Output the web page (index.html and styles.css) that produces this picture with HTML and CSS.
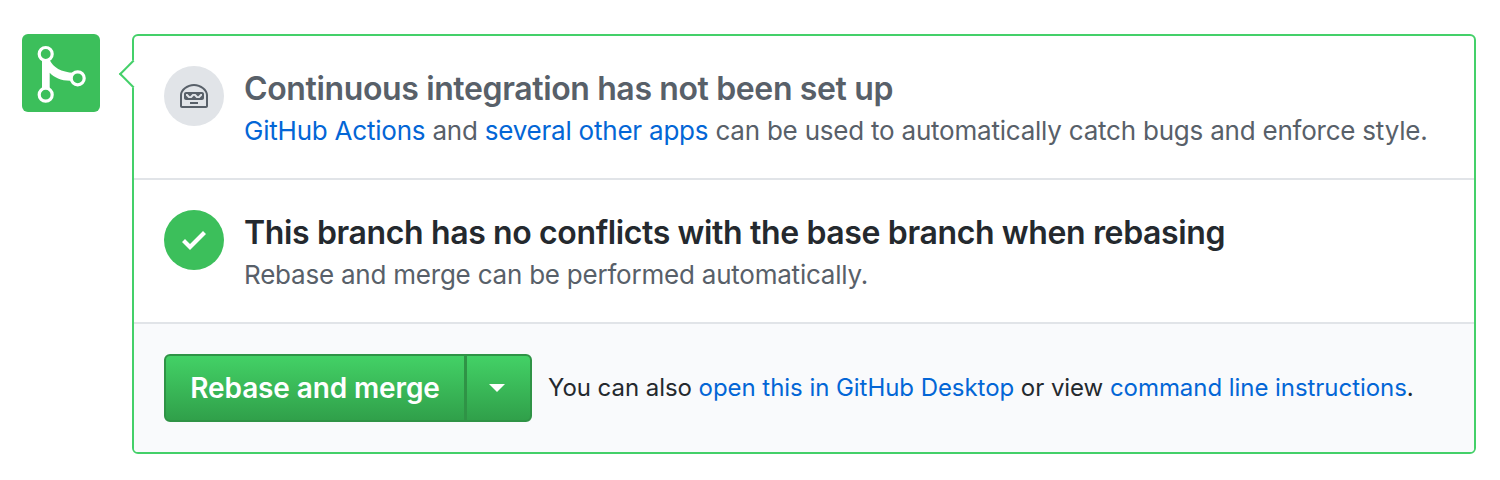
FILE: index.html
```html
<!DOCTYPE html>
<html lang="en">
<head>
  <meta charset="UTF-8">
  <title>Merge status</title>
  <link rel="stylesheet" href="styles.css">
</head>
<body>
  <div class="timeline">
    <div class="merge-icon">
      <svg width="78" height="78" viewBox="0 0 78 78" fill="#3cbf5b" stroke="#fff">
        <path d="M20 20H27.700V26C31 33 39 38.500 52 38.700L48 46.800C39 46.500 32 43.500 27.700 38.700V60H20Z" fill="#fff" stroke="none"/>
        <circle cx="23.700" cy="20" r="6.500" stroke-width="3.200"/>
        <circle cx="23.700" cy="60.700" r="6.500" stroke-width="3.200"/>
        <circle cx="55.700" cy="44.300" r="6.500" stroke-width="3.200"/>
      </svg>
    </div>

    <div class="merge-box">
      <span class="caret"></span>

      <div class="section">
        <div class="status-icon neutral">
          <svg width="28" height="32" viewBox="0 0 14 16" fill="#586069">
            <path fill-rule="evenodd" d="M3 6c-.55 0-1 .45-1 1v2c0 .55.45 1 1 1h8c.55 0 1-.45 1-1V7c0-.55-.45-1-1-1H3zm8 1.750L9.750 9h-1.500L7 7.750 5.750 9h-1.500L3 7.750V7h.750L5 8.250 6.250 7h1.500L9 8.250 10.250 7H11v.750zM5 11h4v1H5v-1zm2-9C3.390 2 0 4.750 0 7.500V13c0 .550.450 1 1 1h12c.550 0 1-.450 1-1V7.500C14 4.750 10.610 2 7 2zm6 11H1V7.500C1 5.220 4.080 3 7 3s6 2.220 6 4.500V13z"/>
          </svg>
        </div>
        <div>
          <h3 class="muted-title">Continuous integration has not been set up</h3>
          <p class="note"><a href="#">GitHub Actions</a> and <a href="#">several other apps</a> can be used to automatically catch bugs and enforce style.</p>
        </div>
      </div>

      <div class="section">
        <div class="status-icon success">
          <svg width="24" height="32" viewBox="0 0 12 16" fill="#fff">
            <path fill-rule="evenodd" d="M12 5l-8 8-4-4 1.500-1.500L4 10l6.500-6.500L12 5z"/>
          </svg>
        </div>
        <div>
          <h3>This branch has no conflicts with the base branch when rebasing</h3>
          <p class="note">Rebase and merge can be performed automatically.</p>
        </div>
      </div>

      <div class="actions">
        <div class="btn-group">
          <button class="btn btn-main">Rebase and merge</button>
          <button class="btn btn-caret"><span class="down"></span></button>
        </div>
        <p class="alt">You can also <a href="#">open this in GitHub Desktop</a> or view <a href="#">command line instructions</a>.</p>
      </div>
    </div>
  </div>
</body>
</html>
```

FILE: styles.css
```css
body {
  margin: 0;
  background: #ffffff;
  font-family: Inter, "Liberation Sans", sans-serif;
  color: #24292e;
}

a {
  color: #0366d6;
  text-decoration: none;
}

.timeline {
  display: flex;
  gap: 32px;
  align-items: flex-start;
  padding: 34px 24px 0 22px;
}

.merge-icon {
  width: 78px;
  height: 78px;
  flex: none;
  background: #3cbf5b;
  border-radius: 6px;
}

.merge-icon svg {
  display: block;
}

.merge-box {
  position: relative;
  flex: 1;
  border: 2px solid #44d069;
  border-radius: 6px;
}

.caret {
  position: absolute;
  top: 28px;
  left: -11px;
  width: 20px;
  height: 20px;
  box-sizing: border-box;
  background: #ffffff;
  border-left: 2px solid #44d069;
  border-bottom: 2px solid #44d069;
  transform: rotate(45deg);
}

.section {
  display: flex;
  gap: 20px;
  height: 144px;
  padding: 30px 30px 0;
  box-sizing: border-box;
  border-bottom: 2px solid #e1e4e8;
}

.status-icon {
  width: 60px;
  height: 60px;
  flex: none;
  display: flex;
  justify-content: center;
  align-items: center;
  border-radius: 50%;
}

.neutral {
  background: #e1e4e8;
}

.success {
  background: #3cbf5b;
}

h3 {
  margin: 0 0 -1px;
  font-size: 32px;
  line-height: 46px;
  font-weight: 600;
  letter-spacing: -0.37px;
}

.muted-title {
  color: #586069;
}

.note {
  margin: 0;
  font-size: 26px;
  line-height: 40px;
  letter-spacing: -0.22px;
  color: #586069;
}

.actions {
  display: flex;
  align-items: center;
  gap: 16px;
  height: 128px;
  padding: 0 30px;
  background: #f9fafc;
  border-radius: 0 0 4px 4px;
}

.btn-group {
  display: flex;
  flex: none;
}

.btn {
  height: 68px;
  margin: 0;
  color: #ffffff;
  font-family: inherit;
  font-size: 28px;
  font-weight: 600;
  letter-spacing: -0.12px;
  background: linear-gradient(#43d166, #30a04a);
  border: 2px solid #2f9346;
}

.btn-main {
  width: 302px;
  padding: 0;
  border-radius: 6px 0 0 6px;
}

.btn-caret {
  display: flex;
  justify-content: center;
  align-items: center;
  width: 67px;
  margin-left: -1px;
  padding: 0 3px 0 0;
  border-radius: 0 6px 6px 0;
}

.down {
  border-top: 8px solid #ffffff;
  border-left: 8px solid transparent;
  border-right: 8px solid transparent;
}

.alt {
  margin: -2px 0 0;
  font-size: 24px;
  letter-spacing: -0.05px;
}
```
